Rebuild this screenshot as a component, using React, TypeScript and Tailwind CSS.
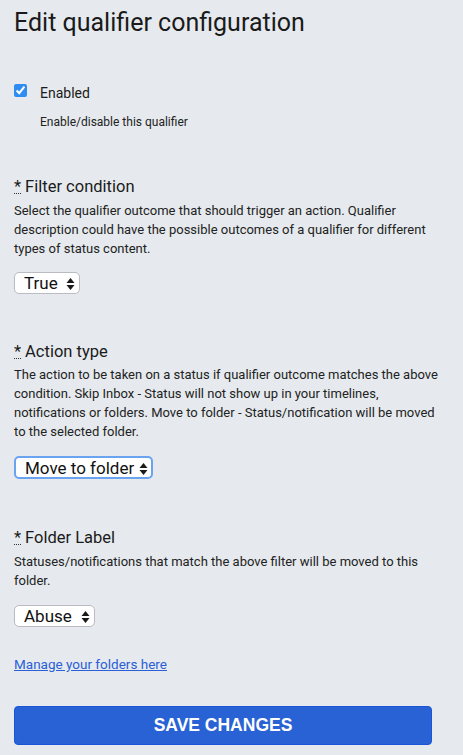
const Arrows = () => (
  <svg width="9" height="13" viewBox="0 0 9 13" className="pointer-events-none absolute right-[5px] top-1/2 -translate-y-1/2">
    <path d="M4.5 0.5 L8.5 5.5 H0.5 Z" fill="#1a1a1a" />
    <path d="M4.5 12.5 L8.5 7.5 H0.5 Z" fill="#1a1a1a" />
  </svg>
);

interface SelectProps {
  value: string;
  options: string[];
  width: string;
  focused?: boolean;
}

const Select = ({ value, options, width, focused }: SelectProps) => (
  <div className={`relative ${width}`}>
    <select
      defaultValue={value}
      className={`h-[22px] w-full appearance-none rounded-[5px] bg-white pl-[9px] pr-4 text-[17px] leading-[20px] text-[#111] outline-none ${
        focused ? 'h-[23px] border-2 border-[#6aa3f0] pl-[8px]' : 'border border-[#b9bcc0]'
      }`}
    >
      {options.map((o) => (
        <option key={o}>{o}</option>
      ))}
    </select>
    <Arrows />
  </div>
);

const Label = ({ children }: { children: string }) => (
  <div className="flex items-baseline text-[16.5px] leading-[20px] text-[#1a1a1a]">
    <abbr title="required" className="mr-[4px] no-underline [border-bottom:1px_dotted_#333] leading-[12px]">
      *
    </abbr>
    <span>{children}</span>
  </div>
);

export default function App() {
  return (
    <div
      className="min-h-[755px] bg-[#e6eaee] px-[14px] pt-[9px] text-[#222]"
      style={{ fontFamily: 'Roboto, "Liberation Sans", sans-serif' }}
    >
      <h1 className="text-[25px] font-normal leading-[28px] text-[#1a1a1a]">Edit qualifier configuration</h1>

      <div className="mt-[47px] flex items-start">
        <input type="checkbox" defaultChecked className="h-[13px] w-[13px] accent-[#2f8cf0]" />
        <div className="ml-[13px]">
          <div className="text-[14px] leading-[18px] text-[#1a1a1a]">Enabled</div>
          <div className="mt-[12px] text-[12px] leading-[16px] text-[#222]">Enable/disable this qualifier</div>
        </div>
      </div>

      <div className="mt-[47px]">
        <Label>Filter condition</Label>
        <p className="mt-[4px] text-[13px] leading-[19px] text-[#222]">
          Select the qualifier outcome that should trigger an action. Qualifier description could have the possible
          outcomes of a qualifier for different types of status content.
        </p>
        <div className="mt-[14px]">
          <Select value="True" options={['True', 'False']} width="w-[66px]" />
        </div>
      </div>

      <div className="mt-[46px]">
        <Label>Action type</Label>
        <p className="mt-[3px] text-[13px] leading-[19px] text-[#222]">
          The action to be taken on a status if qualifier outcome matches the above condition. Skip Inbox - Status
          will not show up in your timelines, notifications or folders. Move to folder - Status/notification will be
          moved to the selected folder.
        </p>
        <div className="mt-[15px]">
          <Select value="Move to folder" options={['Skip Inbox', 'Move to folder']} width="w-[139px]" focused />
        </div>
      </div>

      <div className="mt-[47px]">
        <Label>Folder Label</Label>
        <p className="mt-[4px] text-[13px] leading-[19px] text-[#222]">
          Statuses/notifications that match the above filter will be moved to this folder.
        </p>
        <div className="mt-[15px]">
          <Select value="Abuse" options={['Abuse', 'Spam']} width="w-[81px]" />
        </div>
      </div>

      <a href="#" className="mt-[26px] inline-block text-[13.5px] leading-[18px] text-[#2a5fd6] underline">
        Manage your folders here
      </a>

      <button
        className="mt-[30px] flex h-[39px] w-[418px] items-center justify-center rounded-[4px] border border-[#1a55d8] bg-[#2862d4] text-[17.5px] font-bold text-white"
        style={{ fontFamily: '"Liberation Sans", Arial, sans-serif' }}
      >
        SAVE CHANGES
      </button>
    </div>
  );
}
